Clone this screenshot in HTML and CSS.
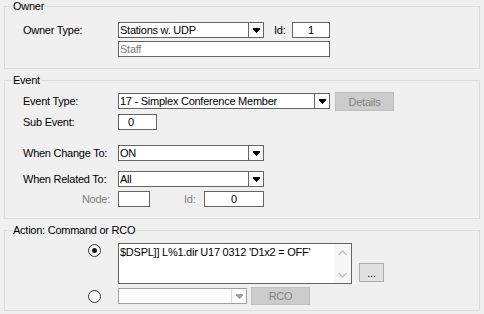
FILE: index.html
```html
<!DOCTYPE html>
<html lang="en">
<head>
  <meta charset="UTF-8">
  <title>Event Action</title>
  <link rel="stylesheet" href="styles.css">
</head>
<body>

<fieldset class="group">
  <legend>Owner</legend>
  <div class="body owner">
    <div class="row">
      <span class="label">Owner Type:</span>
      <div class="combo w146">
        <span class="val">Stations w. UDP</span>
        <span class="drop"><svg width="7" height="5" viewBox="0 0 7 5"><path d="M0 0h7v2h-1v1h-1v1h-1v1h-1v-1h-1v-1h-1v-1h-1z"/></svg></span>
      </div>
      <span class="sublabel id-label">Id:</span>
      <div class="box w38 center">1</div>
    </div>
    <div class="row">
      <span class="label"></span>
      <div class="box w212 muted">Staff</div>
    </div>
  </div>
</fieldset>

<fieldset class="group">
  <legend>Event</legend>
  <div class="body event">
    <div class="row">
      <span class="label">Event Type:</span>
      <div class="combo w212">
        <span class="val">17 - Simplex Conference Member</span>
        <span class="drop"><svg width="7" height="5" viewBox="0 0 7 5"><path d="M0 0h7v2h-1v1h-1v1h-1v1h-1v-1h-1v-1h-1v-1h-1z"/></svg></span>
      </div>
      <div class="btn disabled details">Details</div>
    </div>
    <div class="row sub">
      <span class="label">Sub Event:</span>
      <div class="box w39 pad8">0</div>
    </div>
    <div class="row change">
      <span class="label">When Change To:</span>
      <div class="combo w146">
        <span class="val">ON</span>
        <span class="drop"><svg width="7" height="5" viewBox="0 0 7 5"><path d="M0 0h7v2h-1v1h-1v1h-1v1h-1v-1h-1v-1h-1v-1h-1z"/></svg></span>
      </div>
    </div>
    <div class="row related">
      <span class="label">When Related To:</span>
      <div class="combo w146">
        <span class="val">All</span>
        <span class="drop"><svg width="7" height="5" viewBox="0 0 7 5"><path d="M0 0h7v2h-1v1h-1v1h-1v1h-1v-1h-1v-1h-1v-1h-1z"/></svg></span>
      </div>
    </div>
    <div class="row node">
      <span class="label right muted">Node:</span>
      <div class="box w32"></div>
      <span class="sublabel node-id muted">Id:</span>
      <div class="box w60 center">0</div>
    </div>
  </div>
</fieldset>

<fieldset class="group">
  <legend>Action: Command or RCO</legend>
  <div class="body action">
    <div class="row cmd">
      <span class="label"><span class="radio checked"></span></span>
      <div class="memo">
        <div class="memo-text">$DSPL]] L%1.dir U17 0312 'D1x2 = OFF'</div>
        <div class="scroll">
          <svg width="9" height="6" viewBox="0 0 9 6"><path d="M0.5 5L4.5 1L8.5 5" fill="none" stroke="#c2c2c2" stroke-width="1.4"/></svg>
          <svg width="9" height="6" viewBox="0 0 9 6"><path d="M0.5 1L4.5 5L8.5 1" fill="none" stroke="#c2c2c2" stroke-width="1.4"/></svg>
        </div>
      </div>
      <div class="btn more">...</div>
    </div>
    <div class="row rco">
      <span class="label"><span class="radio"></span></span>
      <div class="combo w129 off">
        <span class="val"></span>
        <span class="drop"><svg width="7" height="5" viewBox="0 0 7 5"><path d="M0 0h7v2h-1v1h-1v1h-1v1h-1v-1h-1v-1h-1v-1h-1z"/></svg></span>
      </div>
      <div class="btn disabled rco-btn">RCO</div>
    </div>
  </div>
</fieldset>

</body>
</html>
```

FILE: styles.css
```css
body {
  margin: 0;
  background: #f0f0f0;
  font-family: "Liberation Sans", Arial, sans-serif;
  font-size: 11px;
  letter-spacing: -0.25px;
  color: #000;
}
.group {
  margin: 0 4px;
  padding: 0;
  border: 1px solid #dcdcdc;
  min-width: 0;
}
.group + .group {
  margin-top: 5px;
}
legend {
  margin-left: 7px;
  padding: 0 1px;
  line-height: 13px;
}
.body {
  padding: 9px 0 11px 18px;
}
.row {
  display: flex;
  align-items: center;
  height: 16px;
}
.row + .row {
  margin-top: 3px;
}
.label {
  width: 95px;
  flex: none;
}
.label.right {
  text-align: right;
  padding-right: 8px;
  width: 87px;
}
.muted {
  color: #808080;
}

/* text boxes and combos */
.box, .combo {
  box-sizing: border-box;
  height: 16px;
  border: 1px solid #646464;
  background: #fff;
  line-height: 14px;
  padding-left: 1px;
  white-space: nowrap;
}
.center {
  text-align: center;
  padding-left: 0;
}
.pad8 {
  padding-left: 9px;
}
.w32 { width: 32px; }
.w38 { width: 38px; }
.w39 { width: 39px; }
.w60 { width: 60px; }
.w129 { width: 129px; }
.w146 { width: 146px; }
.w212 { width: 212px; }
.combo {
  display: flex;
  padding-left: 0;
}
.combo .val {
  flex: 1;
  padding-left: 1px;
  overflow: hidden;
}
.combo .drop {
  width: 14px;
  border-left: 1px solid #646464;
  display: flex;
  align-items: center;
  justify-content: center;
}
.combo .drop svg {
  fill: #000;
}
.combo.off {
  border-color: #a0a0a0;
}
.combo.off .drop {
  border-left-color: #dadada;
}
.combo.off .drop svg {
  fill: #a0a0a0;
}
.sublabel {
  flex: none;
}
.id-label {
  width: 18px;
  margin-left: 10px;
}
.node-id {
  width: 20px;
  margin-left: 34px;
}

/* buttons */
.btn {
  box-sizing: border-box;
  display: flex;
  align-items: center;
  justify-content: center;
  border: 1px solid #adadad;
  background: #e1e1e1;
}
.btn.disabled {
  border-color: #bfbfbf;
  background: #cccccc;
  color: #838383;
}
.details {
  width: 59px;
  height: 19px;
  margin: -1px 0 -2px 5px;
}
.more {
  width: 25px;
  height: 19px;
  margin: 20px 0 0 7px;
}
.rco-btn {
  width: 59px;
  height: 18px;
  margin: -1px 0 0 4px;
}

/* event rows */
.event {
  padding-top: 6px;
}
.event .sub {
  margin-top: 5px;
}
.event .change {
  margin-top: 15px;
}
.event .related {
  margin-top: 10px;
}
.event .node {
  margin-top: 4px;
}

/* action rows */
.action {
  padding-top: 6px;
  padding-bottom: 6px;
}
.action .cmd {
  height: 41px;
  align-items: flex-start;
}
.action .rco {
  margin-top: 4px;
}
.radio {
  display: block;
  box-sizing: border-box;
  width: 13px;
  height: 13px;
  margin-left: 65px;
  border: 1px solid #333;
  border-radius: 50%;
  background: #fff;
  position: relative;
}
.cmd .radio {
  margin-top: 1px;
}
.radio.checked::after {
  content: "";
  position: absolute;
  left: 3px;
  top: 3px;
  width: 5px;
  height: 5px;
  border-radius: 50%;
  background: #1a1a1a;
}
.memo {
  box-sizing: border-box;
  width: 234px;
  height: 41px;
  border: 1px solid #646464;
  background: #fff;
  display: flex;
}
.memo-text {
  flex: 1;
  padding: 1px 0 0 1px;
  line-height: 14px;
  white-space: nowrap;
  overflow: hidden;
}
.scroll {
  width: 17px;
  display: flex;
  flex-direction: column;
  justify-content: space-between;
  align-items: center;
  padding: 6px 0 5px;
  background: #f7f7f7;
}
```
